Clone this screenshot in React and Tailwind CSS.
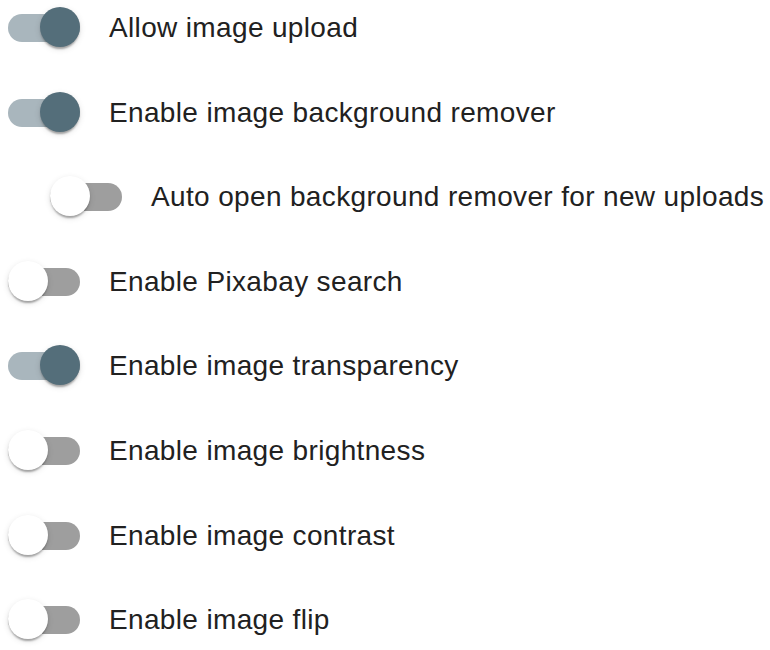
import {useState} from "react";

const OPTIONS = [
    {label: "Allow image upload", on: true},
    {label: "Enable image background remover", on: true},
    {label: "Auto open background remover for new uploads", on: false, nested: true},
    {label: "Enable Pixabay search", on: false},
    {label: "Enable image transparency", on: true},
    {label: "Enable image brightness", on: false},
    {label: "Enable image contrast", on: false},
    {label: "Enable image flip", on: false},
];

function Toggle({checked, onChange}) {
    return (
        <button
            type="button"
            onClick={onChange}
            className="relative w-[72px] h-[56px] shrink-0 flex items-center cursor-pointer"
        >
            <span
                className={
                    "block w-[72px] h-[28px] rounded-full " +
                    (checked ? "bg-[#a9b6bd]" : "bg-[#9e9e9e]")
                }
            />
            <span
                className={
                    "absolute top-[7px] w-[40px] h-[40px] rounded-full shadow-[0_4px_2px_-2px_rgba(0,0,0,0.2),0_2px_2px_0_rgba(0,0,0,0.14),0_2px_6px_0_rgba(0,0,0,0.12)] transition-all " +
                    (checked ? "left-[32px] bg-[#546e7a]" : "left-0 bg-white")
                }
            />
        </button>
    );
}

export default function App() {
    const [items, setItems] = useState(OPTIONS);

    const toggle = (i) => {
        setItems(items.map((it, j) => (j === i ? {...it, on: !it.on} : it)));
    };

    return (
        <div className="w-[770px] h-[650px] bg-white overflow-hidden font-['Liberation_Sans',Arial,sans-serif] text-[#212121]">
            <div className="flex flex-col gap-[28.6px] pl-[8px]">
                {items.map((it, i) => (
                    <label
                        key={it.label}
                        className={"flex items-center gap-[29px] " + (it.nested ? "pl-[42px]" : "")}
                    >
                        <Toggle checked={it.on} onChange={() => toggle(i)}/>
                        <span className="text-[28px] tracking-[0.35px] leading-none whitespace-nowrap">{it.label}</span>
                    </label>
                ))}
            </div>
        </div>
    );
}
